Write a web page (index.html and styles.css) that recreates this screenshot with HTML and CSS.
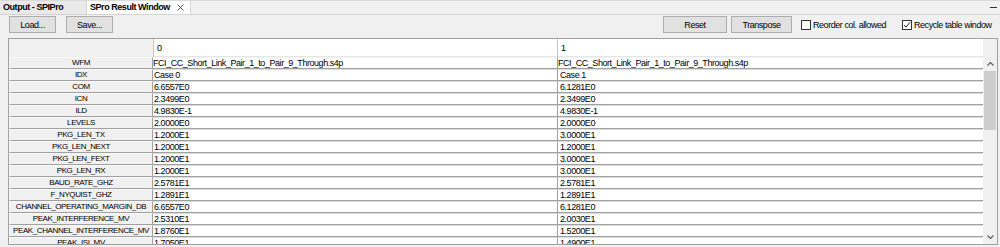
FILE: index.html
```html
<!DOCTYPE html>
<html lang="en">
<head>
    <meta charset="UTF-8">
    <title>SPro Result Window</title>
    <link rel="stylesheet" href="styles.css">
</head>
<body>
    <div class="tabs">
        <div class="tab">Output - SPIPro</div>
        <div class="tab active">
            <span>SPro Result Window</span>
            <svg class="close" width="7" height="7" viewBox="0 0 7 7"><path d="M0.5 0.5L6.5 6.5M6.5 0.5L0.5 6.5" stroke="#555" stroke-width="1"/></svg>
        </div>
        <div class="tab-fill"><span class="dash"></span></div>
    </div>

    <div class="toolbar">
        <button class="btn">Load...</button>
        <button class="btn save">Save...</button>
        <div class="right">
            <button class="btn reset">Reset</button>
            <button class="btn transpose">Transpose</button>
            <label class="check first"><span class="box"></span>Reorder col. allowed</label>
            <label class="check"><span class="box"><svg width="8" height="8" viewBox="0 0 8 8"><path d="M1 4L3 6.2L7 1.2" fill="none" stroke="#222" stroke-width="1"/></svg></span>Recycle table window</label>
        </div>
    </div>

    <div class="frame">
        <div class="grid">
            <div class="corner"></div>
            <div class="colhead">0</div>
            <div class="colhead">1</div>

            <div class="rowhead">WFM</div><div class="cell first">FCI_CC_Short_Link_Pair_1_to_Pair_9_Through.s4p</div><div class="cell c1 first">FCI_CC_Short_Link_Pair_1_to_Pair_9_Through.s4p</div>
            <div class="rowhead">IDX</div><div class="cell">Case 0</div><div class="cell c1">Case 1</div>
            <div class="rowhead">COM</div><div class="cell">6.6557E0</div><div class="cell c1">6.1281E0</div>
            <div class="rowhead">ICN</div><div class="cell">2.3499E0</div><div class="cell c1">2.3499E0</div>
            <div class="rowhead">ILD</div><div class="cell">4.9830E-1</div><div class="cell c1">4.9830E-1</div>
            <div class="rowhead">LEVELS</div><div class="cell">2.0000E0</div><div class="cell c1">2.0000E0</div>
            <div class="rowhead">PKG_LEN_TX</div><div class="cell">1.2000E1</div><div class="cell c1">3.0000E1</div>
            <div class="rowhead">PKG_LEN_NEXT</div><div class="cell">1.2000E1</div><div class="cell c1">1.2000E1</div>
            <div class="rowhead">PKG_LEN_FEXT</div><div class="cell">1.2000E1</div><div class="cell c1">3.0000E1</div>
            <div class="rowhead">PKG_LEN_RX</div><div class="cell">1.2000E1</div><div class="cell c1">3.0000E1</div>
            <div class="rowhead">BAUD_RATE_GHZ</div><div class="cell">2.5781E1</div><div class="cell c1">2.5781E1</div>
            <div class="rowhead">F_NYQUIST_GHZ</div><div class="cell">1.2891E1</div><div class="cell c1">1.2891E1</div>
            <div class="rowhead">CHANNEL_OPERATING_MARGIN_DB</div><div class="cell">6.6557E0</div><div class="cell c1">6.1281E0</div>
            <div class="rowhead">PEAK_INTERFERENCE_MV</div><div class="cell">2.5310E1</div><div class="cell c1">2.0030E1</div>
            <div class="rowhead">PEAK_CHANNEL_INTERFERENCE_MV</div><div class="cell">1.8760E1</div><div class="cell c1">1.5200E1</div>
            <div class="rowhead">PEAK_ISI_MV</div><div class="cell">1.7050E1</div><div class="cell c1">1.4900E1</div>
        </div>
        <div class="vscroll">
            <div class="vs-head"></div>
            <div class="vs-btn"><svg width="7" height="4" viewBox="0 0 7 4"><path d="M0.5 3.5L3.5 0.5L6.5 3.5" fill="none" stroke="#606060" stroke-width="1.2"/></svg></div>
            <div class="vs-thumb"></div>
            <div class="vs-track"></div>
            <div class="vs-btn"><svg width="7" height="4" viewBox="0 0 7 4"><path d="M0.5 0.5L3.5 3.5L6.5 0.5" fill="none" stroke="#606060" stroke-width="1.2"/></svg></div>
        </div>
    </div>
</body>
</html>
```

FILE: styles.css
```css
body {
    margin: 0;
    width: 1000px;
    height: 247px;
    overflow: hidden;
    background-color: #f0f0f0;
    font-family: "Liberation Sans", Arial, sans-serif;
    font-size: 9px;
    letter-spacing: -0.45px;
    color: #000;
}

/* tab strip */
.tabs {
    display: flex;
    height: 15px;
    box-sizing: border-box;
    border-top: 1px solid #dadada;
    border-bottom: 1px solid #d4d4d4;
}
.tab {
    width: 87px;
    box-sizing: border-box;
    padding-left: 3px;
    line-height: 13px;
    font-weight: bold;
    background-color: #e9e9e9;
    border-right: 1px solid #d4d4d4;
}
.tab.active {
    width: 104px;
    display: flex;
    align-items: center;
    background-color: #fff;
}
.close {
    margin-left: auto;
    margin-right: 6px;
}
.tab-fill {
    flex: 1;
    display: flex;
    justify-content: flex-end;
    align-items: center;
}
.dash {
    width: 7px;
    height: 1px;
    margin-right: 3px;
    background-color: #333;
}

/* toolbar */
.toolbar {
    display: flex;
    align-items: flex-start;
    height: 23px;
    box-sizing: border-box;
    padding: 1px 3px 0 9px;
}
.btn {
    width: 47px;
    height: 17px;
    padding: 0;
    font: inherit;
    letter-spacing: inherit;
    color: #000;
    background-color: #e1e1e1;
    border: 1px solid #adadad;
}
.save {
    margin-left: 10px;
}
.right {
    margin-left: auto;
    display: flex;
    align-items: center;
    height: 17px;
}
.reset {
    width: 64px;
}
.transpose {
    width: 61px;
    margin-left: 4px;
}
.check {
    display: flex;
    align-items: center;
    gap: 2px;
    width: 95px;
    margin-top: 1px;
}
.check.first {
    width: 101px;
    margin-left: 9px;
}
.box {
    width: 10px;
    height: 10px;
    box-sizing: border-box;
    border: 1px solid #333;
    background-color: #fff;
    display: flex;
    align-items: center;
    justify-content: center;
}

/* result table */
.frame {
    display: flex;
    margin-left: 8px;
    width: 990px;
    height: 207px;
    box-sizing: border-box;
    border: 1px solid #a0a0a0;
    background-color: #fff;
    overflow: hidden;
}
.grid {
    width: 974px;
    display: grid;
    grid-template-columns: 144px 404px 426px;
    grid-template-rows: 18px;
    grid-auto-rows: 12px;
    align-content: start;
}
.corner {
    background-color: #f0f0f0;
}
.colhead {
    padding-left: 3px;
    line-height: 18px;
    border-left: 1px solid #c8c8c8;
    box-shadow: inset 0 -1px 0 #e6e6e6;
}
.rowhead {
    box-sizing: border-box;
    background-color: #f0f0f0;
    border-top: 1px solid #fafafa;
    border-left: 1px solid #fafafa;
    border-bottom: 1px solid #a0a0a0;
    border-right: 1px solid #a0a0a0;
    text-align: center;
    font-size: 8px;
    letter-spacing: -0.4px;
    line-height: 10px;
    white-space: nowrap;
    overflow: hidden;
}
.cell {
    box-sizing: border-box;
    padding-left: 1px;
    line-height: 10px;
    border-top: 1px solid #dcdcdc;
    border-bottom: 1px solid #a0a0a0;
    white-space: nowrap;
    overflow: hidden;
}
.cell.first {
    padding-left: 0;
    border-top-color: #f4f4f4;
}
.c1 {
    padding-left: 2px;
    border-left: 1px solid #a0a0a0;
}

/* scrollbar */
.vscroll {
    width: 14px;
    display: flex;
    flex-direction: column;
    background-color: #f0f0f0;
}
.vs-head {
    height: 18px;
}
.vs-btn {
    height: 14px;
    display: flex;
    align-items: center;
    justify-content: center;
}
.vs-thumb {
    height: 59px;
    margin: 0 1px;
    background-color: #cdcdcd;
}
.vs-track {
    flex: 1;
}
```
